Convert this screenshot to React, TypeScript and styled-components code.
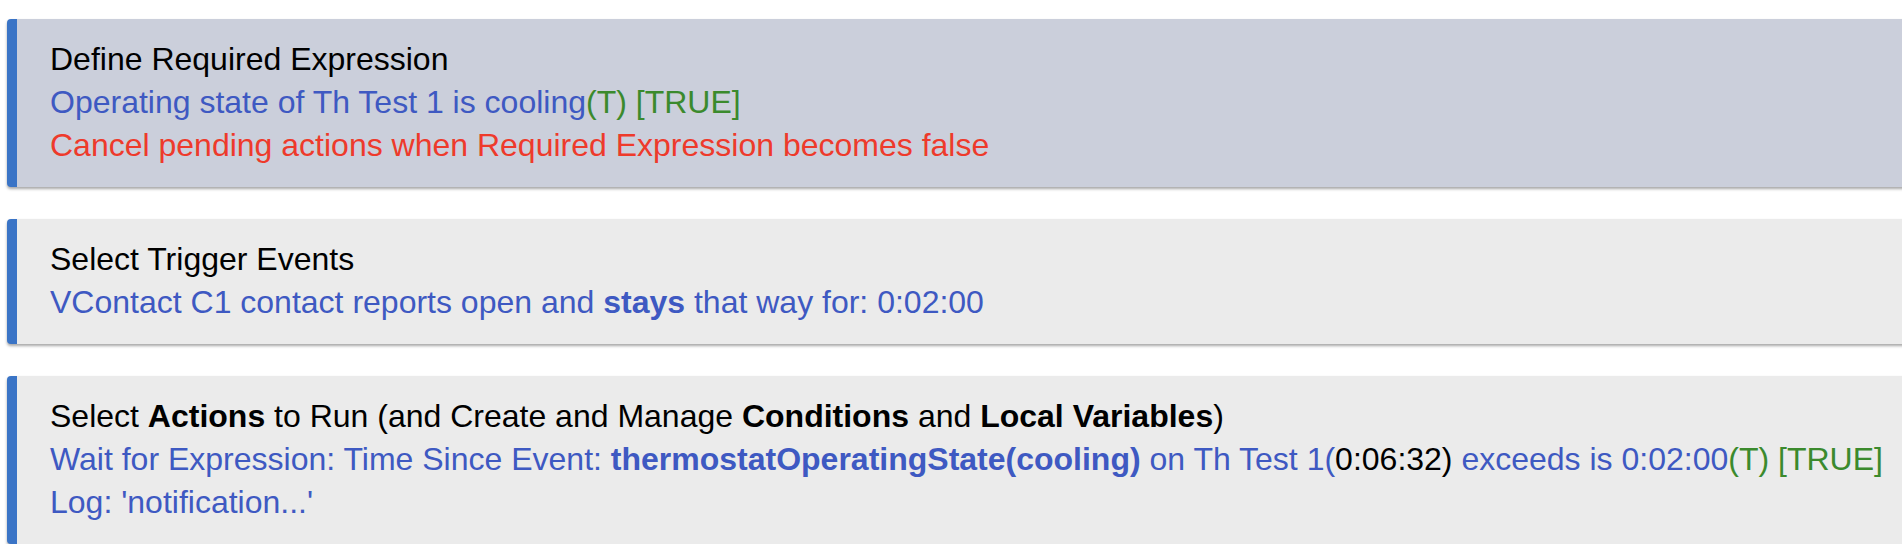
import styled, { createGlobalStyle } from 'styled-components';

const GlobalStyle = createGlobalStyle`
  html, body {
    margin: 0;
    padding: 0;
    background: #ffffff;
    overflow: hidden;
  }
  body {
    font-family: 'Liberation Sans', Arial, Helvetica, sans-serif;
  }
`;

const Page = styled.div`
  display: flex;
  flex-direction: column;
  gap: 32px;
  padding: 19px 0 0 7px;
  width: 1920px;
`;

const Panel = styled.div<{ $shade?: boolean }>`
  background: ${(p) => (p.$shade ? '#cbcfdb' : '#ebebeb')};
  border-left: 10px solid #3a74c6;
  border-radius: 4px;
  box-shadow: 0 2px 3px rgba(0, 0, 0, 0.35);
  padding: 19px 0 20px 33px;
  font-size: 32px;
  line-height: 43px;
`;

const Line = styled.div<{ $tone?: 'title' | 'blue' | 'red' }>`
  white-space: nowrap;
  color: ${(p) =>
    p.$tone === 'blue' ? '#3e59c2' : p.$tone === 'red' ? '#ee3a2b' : '#000000'};
`;

const Green = styled.span`
  color: #3b8a2d;
`;

const Plain = styled.span`
  color: #000000;
`;

const Strong = styled.b`
  font-weight: 700;
`;

function App() {
  return (
    <>
      <GlobalStyle />
      <Page>
        <Panel $shade>
          <Line>Define Required Expression</Line>
          <Line $tone="blue">
            Operating state of Th Test 1 is cooling<Green>(T) [TRUE]</Green>
          </Line>
          <Line $tone="red">Cancel pending actions when Required Expression becomes false</Line>
        </Panel>
        <Panel>
          <Line>Select Trigger Events</Line>
          <Line $tone="blue">
            VContact C1 contact reports open and <Strong>stays</Strong> that way for: 0:02:00
          </Line>
        </Panel>
        <Panel>
          <Line>
            Select <Strong>Actions</Strong> to Run (and Create and Manage{' '}
            <Strong>Conditions</Strong> and <Strong>Local Variables</Strong>)
          </Line>
          <Line $tone="blue">
            Wait for Expression: Time Since Event:{' '}
            <Strong>thermostatOperatingState(cooling)</Strong> on Th Test 1(
            <Plain>0:06:32)</Plain> exceeds is 0:02:00<Green>(T) [TRUE]</Green>
          </Line>
          <Line $tone="blue">Log: 'notification...'</Line>
        </Panel>
      </Page>
    </>
  );
}

export default App;
